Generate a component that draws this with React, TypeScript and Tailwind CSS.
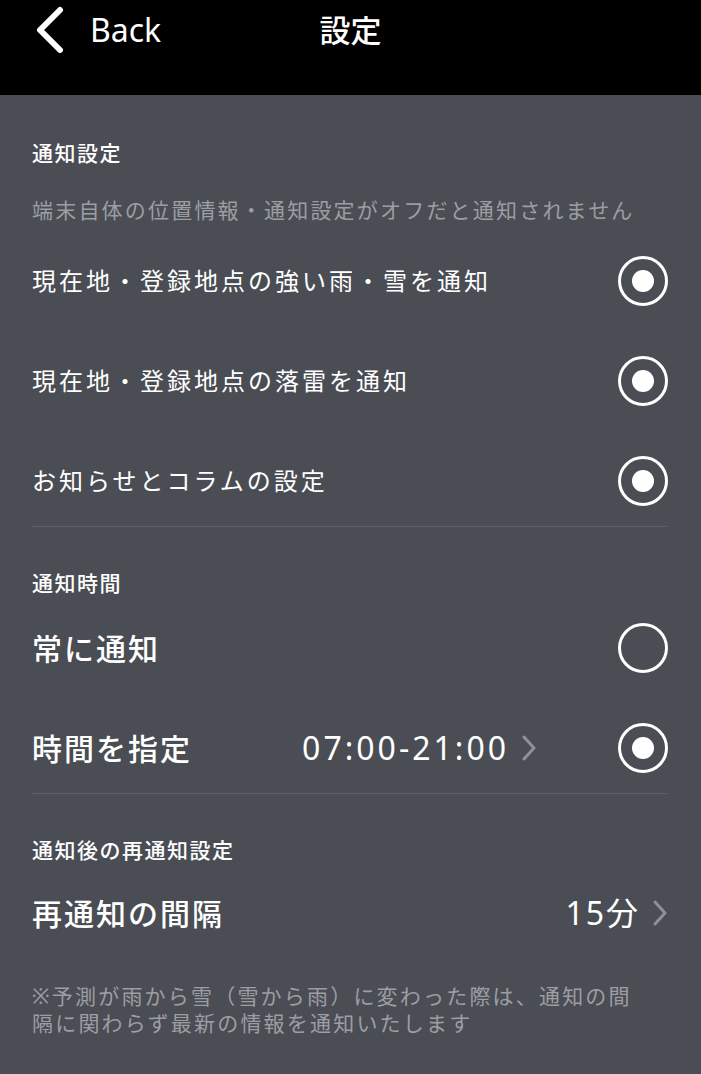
import React from 'react';

const font = { fontFamily: '"Noto Sans", "Noto Sans CJK JP", sans-serif' };

function Radio({ checked }: { checked: boolean }) {
    return (
        <div className="w-[50px] h-[50px] shrink-0 rounded-full border-[3px] border-white flex items-center justify-center">
            {checked && <div className="w-[22px] h-[22px] rounded-full bg-white"></div>}
        </div>
    );
}

function Chevron() {
    return (
        <svg width="16" height="26" viewBox="0 0 16 26" className="shrink-0">
            <polyline points="3,2 13,13 3,24" fill="none" stroke="#8e9095" strokeWidth="3" strokeLinecap="round" strokeLinejoin="round" />
        </svg>
    );
}

function SectionTitle({ children, className = '' }: { children: React.ReactNode; className?: string }) {
    return (
        <div className={`h-[30px] leading-[30px] text-[21px] tracking-[1.5px] font-medium text-white ${className}`}>
            {children}
        </div>
    );
}

function Row({ label, checked }: { label: string; checked: boolean }) {
    return (
        <div className="h-[100px] flex items-center justify-between">
            <span className="text-[24px] tracking-[3px] text-white">{label}</span>
            <Radio checked={checked} />
        </div>
    );
}

export default function App() {
    return (
        <div className="min-h-screen bg-[#4a4d54]" style={font}>
            {/* Header */}
            <div className="h-[95px] bg-black relative">
                <div className="h-[60px] flex items-center pl-[35px]">
                    <svg width="30" height="48" viewBox="0 0 30 48">
                        <polyline points="25,4 5,24 25,44" fill="none" stroke="white" strokeWidth="6" strokeLinecap="round" strokeLinejoin="round" />
                    </svg>
                    <span className="ml-[25px] text-[32px] text-white leading-none">Back</span>
                </div>
                <div className="absolute top-0 left-0 right-0 h-[60px] flex items-center justify-center">
                    <span className="text-[31px] font-medium text-white leading-none">設定</span>
                </div>
            </div>

            <div className="pl-[32px] pr-[33px]">
                {/* 通知設定 */}
                <SectionTitle className="mt-[43px]">通知設定</SectionTitle>
                <div className="mt-[27px] h-[30px] leading-[30px] text-[21px] tracking-[2.2px] text-[#9c9ea3]">
                    端末自体の位置情報・通知設定がオフだと通知されません
                </div>
                <div className="mt-[6px]">
                    <Row label="現在地・登録地点の強い雨・雪を通知" checked />
                    <Row label="現在地・登録地点の落雷を通知" checked />
                    <Row label="お知らせとコラムの設定" checked />
                </div>
                <div className="-mt-[5px] h-px bg-[#5c5f65]"></div>

                {/* 通知時間 */}
                <SectionTitle className="mt-[41px]">通知時間</SectionTitle>
                <div className="h-[100px] flex items-center">
                    <span className="text-[30px] tracking-[2px] font-medium text-white">常に通知</span>
                    <div className="ml-auto">
                        <Radio checked={false} />
                    </div>
                </div>
                <div className="h-[100px] flex items-center">
                    <span className="text-[30px] tracking-[2px] font-medium text-white">時間を指定</span>
                    <div className="ml-auto flex items-center mr-[81px]">
                        <span className="text-[32px] tracking-[3px] text-white">07:00-21:00</span>
                        <div className="ml-[12px]">
                            <Chevron />
                        </div>
                    </div>
                    <Radio checked />
                </div>
                <div className="-mt-[5px] h-px bg-[#5c5f65]"></div>

                {/* 通知後の再通知設定 */}
                <SectionTitle className="mt-[41px]">通知後の再通知設定</SectionTitle>
                <div className="h-[96px] flex items-center">
                    <span className="text-[30px] tracking-[2px] font-medium text-white">再通知の間隔</span>
                    <div className="ml-auto flex items-center">
                        <span className="text-[32px] tracking-[2px] text-white">15分</span>
                        <div className="ml-[12px]">
                            <Chevron />
                        </div>
                    </div>
                </div>
                <p className="mt-[22px] pr-[22px] text-[21px] leading-[27px] tracking-[2.2px] text-[#9c9ea3]">
                    ※予測が雨から雪（雪から雨）に変わった際は、通知の間隔に関わらず最新の情報を通知いたします
                </p>
            </div>
        </div>
    );
}
